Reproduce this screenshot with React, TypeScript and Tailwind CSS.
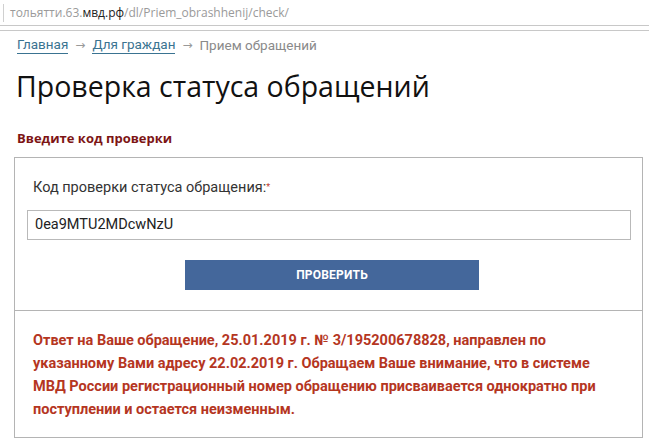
export default function App() {
  return (
    <div className="w-[649px] h-[441px] bg-white overflow-hidden font-['Open_Sans',sans-serif]">
      {/* address bar */}
      <div className="h-[25px] flex items-center pl-[3px]">
        <div className="w-px h-[18px] bg-[#d0d0d0]" />
        <div className="ml-[6px] text-[12px] text-[#9a9a9a] leading-none">
          тольятти.63.<span className="text-[#222]">мвд.рф</span>/dl/Priem_obrashhenij/check/
        </div>
      </div>
      <div className="h-[6px] border-t border-b border-[#c8c8c8]" />

      {/* breadcrumbs */}
      <div className="pl-[17px] pt-[5px] flex items-center text-[13.5px] font-['Roboto',sans-serif] text-[#8a8a8a]">
        <span className="text-[#3a7391] border-b border-[#3a7391] leading-[17px]">Главная</span>
        <span className="px-[7px] text-[#999] font-['DejaVu_Sans',sans-serif] text-[12px]">→</span>
        <span className="text-[#3a7391] border-b border-[#3a7391] leading-[17px]">Для граждан</span>
        <span className="px-[7px] text-[#999] font-['DejaVu_Sans',sans-serif] text-[12px]">→</span>
        <span className="leading-[17px]">Прием обращений</span>
      </div>

      <h1 className="pl-[16px] mt-[12px] text-[28.5px] leading-[40px] text-[#111] font-normal">Проверка статуса обращений</h1>

      <div className="pl-[17px] mt-[22px] text-[13px] font-bold text-[#7d1515] leading-[20px]">Введите код проверки</div>

      <div className="ml-[14px] w-[629px] mt-[9px] border border-[#b4b4b4] font-['Roboto',sans-serif]">
        <div className="px-[12px] pt-[20px] pb-[20px]">
          <div className="pl-[6px] text-[14.5px] text-[#333] leading-[20px]">
            Код проверки статуса обращения:<sup className="text-[#c0392b] text-[9px] relative -top-[2px]">*</sup>
          </div>
          <div className="mt-[12px] w-[604px] h-[30px] border border-[#b9b9b9] flex items-center pl-[7px] text-[14.5px] text-[#222]">
            0ea9MTU2MDcwNzU
          </div>
          <div className="mt-[20px] flex">
            <button className="ml-[158px] w-[294px] h-[30px] bg-[#44679b] text-white text-[12px] font-bold tracking-[0.2px]">
              ПРОВЕРИТЬ
            </button>
          </div>
        </div>
        <div className="border-t border-[#b4b4b4] px-[18px] pt-[18px] pb-[16px] text-[14.5px] font-bold text-[#b5361f] leading-[23px]">
          Ответ на Ваше обращение, 25.01.2019 г. № 3/195200678828, направлен по указанному Вами адресу 22.02.2019 г. Обращаем Ваше внимание, что в системе МВД России регистрационный номер обращению присваивается однократно при поступлении и остается неизменным.
        </div>
      </div>
    </div>
  )
}
